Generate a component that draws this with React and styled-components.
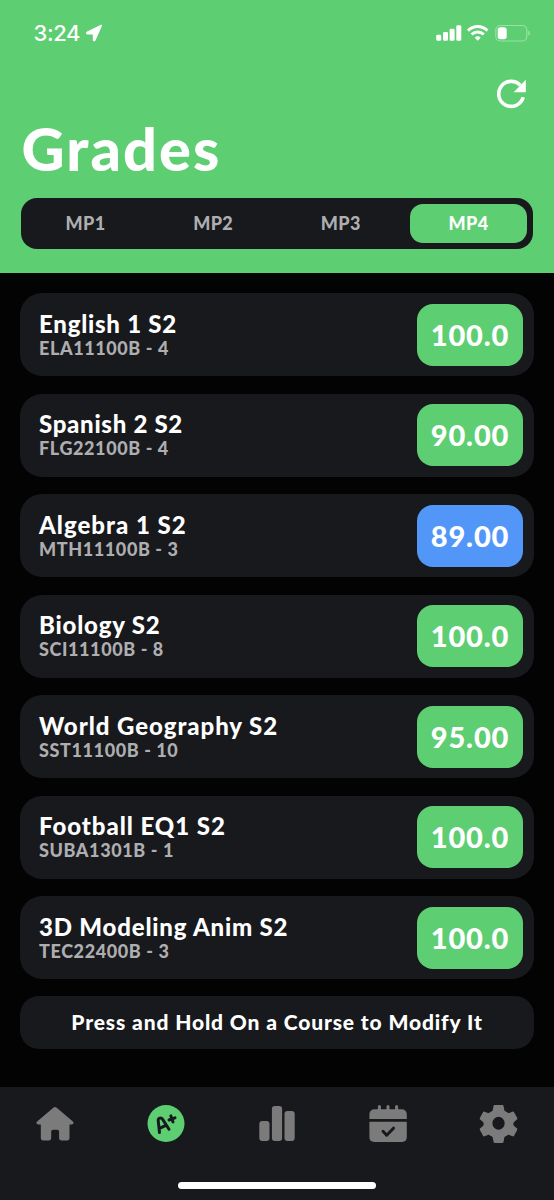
import styled, { createGlobalStyle } from 'styled-components'

const GREEN = '#5dce71'
const BLUE = '#5297f8'
const PANEL = '#18191d'
const MUTED = '#aeaeb0'
const ICON = '#7b7b7b'

const GlobalStyle = createGlobalStyle`
  * { box-sizing: border-box; }
  body {
    margin: 0;
    background: #030304;
    font-family: Lato, "Liberation Sans", sans-serif;
    color: #fff;
  }
`

const Screen = styled.div`
  width: 554px;
  height: 1200px;
  display: flex;
  flex-direction: column;
  overflow: hidden;
`

const Header = styled.header`
  height: 273px;
  background: ${GREEN};
  flex-shrink: 0;
`

const StatusBar = styled.div`
  height: 66px;
  padding: 0 21px 0 33.5px;
  display: flex;
  align-items: center;
  justify-content: space-between;
`

const Clock = styled.div`
  display: flex;
  align-items: center;
  gap: 5px;
  font: 500 22px/26px Inter, sans-serif;
  letter-spacing: -0.4px;
`

const Indicators = styled.div`
  display: flex;
  align-items: center;
`

const Actions = styled.div`
  height: 52px;
  display: flex;
  justify-content: flex-end;
  padding: 13px 28px 0 0;
`

const Title = styled.h1`
  margin: 0 0 0 21.5px;
  height: 80px;
  font-size: 59.5px;
  line-height: 60px;
  font-weight: 900;
  letter-spacing: 2.1px;
`

const Tabs = styled.nav`
  height: 51px;
  margin: 0 21px;
  padding: 6px;
  border-radius: 16px;
  background: ${PANEL};
  display: grid;
  grid-template-columns: repeat(4, 117px);
  justify-content: space-between;
`

const Tab = styled.button`
  border: 0;
  padding: 0;
  border-radius: 13px;
  font: 900 18px/39px Lato, sans-serif;
  letter-spacing: 0.4px;
  background: ${p => (p.$active ? GREEN : 'transparent')};
  color: ${p => (p.$active ? '#fff' : MUTED)};
`

const Courses = styled.main`
  flex: 1;
  padding: 20px 20px 0;
  display: flex;
  flex-direction: column;
  gap: 17.5px;
`

const Card = styled.section`
  height: 83px;
  flex-shrink: 0;
  padding: 0 11px 0 19px;
  border-radius: 22px;
  background: ${PANEL};
  display: flex;
  align-items: center;
  justify-content: space-between;
`

const Name = styled.div`
  padding-top: 1px;
  font-size: 24px;
  line-height: 26px;
  font-weight: 900;
  letter-spacing: ${p => p.$spacing}px;
`

const Code = styled.div`
  font-size: 18px;
  line-height: 23px;
  font-weight: 900;
  color: ${MUTED};
  letter-spacing: 0.6px;
`

const Grade = styled.div`
  width: 106px;
  height: 62px;
  border-radius: 16px;
  background: ${p => (p.$blue ? BLUE : GREEN)};
  font-size: 29px;
  line-height: 61px;
  font-weight: 900;
  letter-spacing: 0.9px;
  text-align: center;
`

const Hint = styled.div`
  height: 52.5px;
  margin-top: -0.5px;
  flex-shrink: 0;
  border-radius: 19px;
  background: ${PANEL};
  font-size: 21px;
  line-height: 51px;
  font-weight: 900;
  letter-spacing: 0.87px;
  text-align: center;
`

const BottomBar = styled.footer`
  height: 113px;
  flex-shrink: 0;
  background: ${PANEL};
  display: flex;
  flex-direction: column;
  justify-content: space-between;
  align-items: center;
  padding: 16px 0 11px;
`

const NavItems = styled.div`
  width: 100%;
  display: grid;
  grid-template-columns: repeat(5, 1fr);
  justify-items: center;
`

const HomeIndicator = styled.div`
  width: 198px;
  height: 7px;
  border-radius: 4px;
  background: #fff;
`

const periods = ['MP1', 'MP2', 'MP3', 'MP4']

const courses = [
  { name: 'English 1 S2', code: 'ELA11100B - 4', grade: '100.0', spacing: 0.75 },
  { name: 'Spanish 2 S2', code: 'FLG22100B - 4', grade: '90.00', spacing: 0.7 },
  { name: 'Algebra 1 S2', code: 'MTH11100B - 3', grade: '89.00', spacing: 1 },
  { name: 'Biology S2', code: 'SCI11100B - 8', grade: '100.0', spacing: 0.8 },
  { name: 'World Geography S2', code: 'SST11100B - 10', grade: '95.00', spacing: 0.95 },
  { name: 'Football EQ1 S2', code: 'SUBA1301B - 1', grade: '100.0', spacing: 0.95 },
  { name: '3D Modeling Anim S2', code: 'TEC22400B - 3', grade: '100.0', spacing: 0.8 },
]

const LocationArrow = () => (
  <svg width="18" height="18" viewBox="0 0 18 18" fill="#fff" stroke="#fff" strokeWidth="1.6" strokeLinejoin="round">
    <path d="M16.300 1.500 2 8.500c-.5.400-.3 1.100.2 1.100H8c.4 0 .6.200.6.600v5.700c0 .7.900.8 1.200.2z" />
  </svg>
)

const Signal = () => (
  <svg width="98" height="20" viewBox="0 0 98 20" fill="#fff">
    <rect x="1.200" y="11.800" width="5" height="6" rx="1.400" />
    <rect x="8" y="9" width="5" height="8.800" rx="1.400" />
    <rect x="14.600" y="5.800" width="5" height="12" rx="1.400" />
    <rect x="21.300" y="2.200" width="5" height="15.600" rx="1.400" />
    <g fill="none" stroke="#fff" strokeWidth="3">
      <path d="M33 7.700a13.500 13.500 0 0 1 19.400 0" />
      <path d="M36.600 11.500a8.600 8.600 0 0 1 12.200 0" />
    </g>
    <path d="m42.700 17.800-3-3.100a4.400 4.400 0 0 1 6 0z" />
    <rect x="60.800" y="2.500" width="31" height="15.500" rx="4.500" fill="none" stroke="#fff" strokeOpacity=".38" strokeWidth="1.200" />
    <rect x="62.700" y="4.200" width="9" height="12" rx="2.700" />
    <path d="M93.300 7.600v5.200c2.200-.9 2.200-4.300 0-5.200z" opacity=".4" />
  </svg>
)

const Refresh = () => (
  <svg width="29" height="30" viewBox="0 0 29 30">
    <path d="M26.200 18.300A12.500 12.500 0 1 1 23.200 6.200" fill="none" stroke="#fff" strokeWidth="3.600" />
    <path d="M28.800.8v12.400H16.700z" fill="#fff" />
  </svg>
)

const HomeIcon = () => (
  <svg width="40" height="40" viewBox="0 0 40 40" fill={ICON}>
    <path d="M18.600 4.500 2.100 18.600c-1.300 1.200-.6 2.900 1.100 2.900H5.800V35c0 1.600.9 2.500 2.500 2.500h5.400c1.600 0 2.500-.9 2.500-2.500v-6.200c0-1.200.8-2 2-2h3.900c1.200 0 2 .8 2 2V35c0 1.600.9 2.500 2.500 2.500h5.400c1.600 0 2.500-.9 2.500-2.500V21.500h2.300c1.700 0 2.400-1.700 1.100-2.900L21.400 4.500c-.9-.8-1.900-.8-2.800 0z" />
  </svg>
)

const GradesIcon = () => (
  <svg width="40" height="40" viewBox="0 0 40 40">
    <circle cx="20" cy="20.500" r="18.500" fill={GREEN} />
    <g fill="none" stroke={PANEL} strokeLinecap="round" strokeLinejoin="round" strokeWidth="3">
      <path d="M13.500 29.500 12.200 17.600c-.2-2.600 2.900-3.500 4.300-1.400L23 26.300M13.600 25.300l6.200-3" />
      <path d="m23 17 6-2.200M24.900 12.900l2.100 6" />
    </g>
  </svg>
)

const ChartIcon = () => (
  <svg width="40" height="40" viewBox="0 0 40 40" fill={ICON}>
    <rect x="2.300" y="18" width="10.200" height="20" rx="3" />
    <rect x="14.900" y="3" width="10.200" height="35" rx="3" />
    <rect x="27.500" y="8" width="10.200" height="30" rx="3" />
  </svg>
)

const CalendarIcon = () => (
  <svg width="40" height="40" viewBox="0 0 40 40" fill={ICON}>
    <path d="M1.400 16.100v-4.500c0-3.500 1.900-5.400 5.400-5.400h3.100V3.600a1.500 1.500 0 0 1 3 0v2.600h5.600V3.600a1.500 1.500 0 0 1 3 0v2.600h5.600V3.600a1.500 1.500 0 0 1 3 0v2.600h3.300c3.500 0 5.400 1.900 5.400 5.400v4.500z" />
    <path d="M1.400 18.800h37.400V34c0 3.300-1.600 4.900-4.900 4.900H6.300c-3.300 0-4.900-1.600-4.900-4.900z" />
    <path d="m15 28.300 3.700 3.900 6.800-7" fill="none" stroke={PANEL} strokeWidth="3" strokeLinecap="round" strokeLinejoin="round" />
  </svg>
)

const GearIcon = () => (
  <svg width="40" height="40" viewBox="0 0 43 41" preserveAspectRatio="none" fill={ICON}>
    <path fillRule="evenodd" d="M16.200 2h8c.9 0 1.200.4 1.400 1.200l.8 4.100c.2.900.7 1.200 1.500 1.500.8.400 1.500.8 2.200 1.300.5.300 1 .3 1.600.1l3.500-1.300c.8-.3 1.300-.1 1.700.6l3.300 5.700c.4.8.3 1.300-.3 1.800l-3 2.500c-.7.600-.7 1.500-.7 2s0 1.400.7 2l3 2.500c.6.500.7 1 .3 1.800l-3.300 5.700c-.4.700-.9.900-1.700.6l-3.500-1.300c-.6-.2-1.100-.2-1.600.1-.7.500-1.400.9-2.200 1.300-.8.300-1.300.6-1.500 1.500l-.8 4.100c-.2.8-.5 1.200-1.400 1.200h-8c-.9 0-1.200-.4-1.400-1.200l-.8-4.100c-.2-.9-.7-1.200-1.500-1.500-.8-.4-1.500-.8-2.200-1.300-.5-.3-1-.3-1.600-.1l-3.500 1.300c-.8.300-1.300.1-1.700-.6l-3.300-5.700c-.4-.8-.3-1.300.3-1.800l3-2.500c.7-.6.7-1.500.7-2s0-1.400-.7-2l-3-2.500c-.6-.5-.7-1-.3-1.800l3.300-5.700c.4-.7.9-.9 1.700-.6l3.500 1.300c.6.2 1.100.2 1.600-.1.700-.5 1.400-.9 2.200-1.300.8-.3 1.300-.6 1.500-1.500l.8-4.100c.2-.8.500-1.200 1.400-1.200zM20.200 14.200a6.600 6.600 0 1 0 0 13.200 6.600 6.600 0 0 0 0-13.200z" transform="translate(.8 0)" />
  </svg>
)

export default function App() {
  return (
    <Screen>
      <GlobalStyle />
      <Header>
        <StatusBar>
          <Clock>3:24 <LocationArrow /></Clock>
          <Indicators><Signal /></Indicators>
        </StatusBar>
        <Actions><Refresh /></Actions>
        <Title>Grades</Title>
        <Tabs>
          {periods.map(p => <Tab key={p} $active={p === 'MP4'}>{p}</Tab>)}
        </Tabs>
      </Header>
      <Courses>
        {courses.map(c => (
          <Card key={c.code}>
            <div>
              <Name $spacing={c.spacing}>{c.name}</Name>
              <Code>{c.code}</Code>
            </div>
            <Grade $blue={parseFloat(c.grade) < 90}>{c.grade}</Grade>
          </Card>
        ))}
        <Hint>Press and Hold On a Course to Modify It</Hint>
      </Courses>
      <BottomBar>
        <NavItems>
          <HomeIcon />
          <GradesIcon />
          <ChartIcon />
          <CalendarIcon />
          <GearIcon />
        </NavItems>
        <HomeIndicator />
      </BottomBar>
    </Screen>
  )
}
